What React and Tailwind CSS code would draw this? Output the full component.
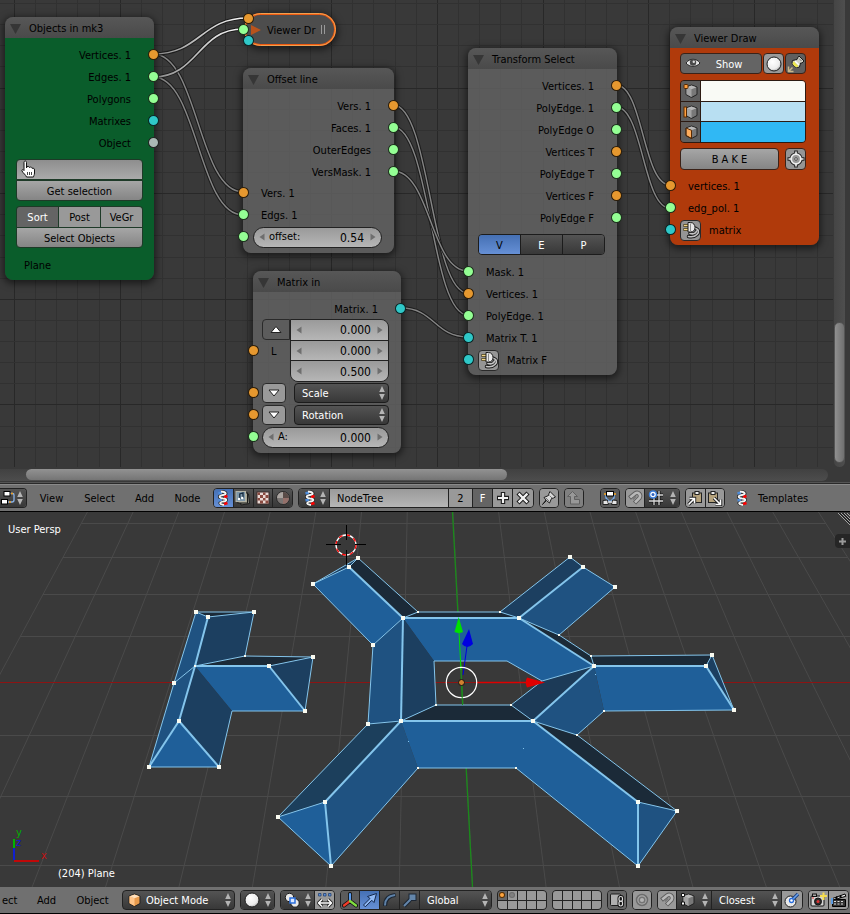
import React from "react";

const ORANGE = "#e6982f";
const GREEN = "#94ff94";
const CYAN = "#2fc8c8";
const GREY = "#a9b8b4";

const NUM = "bg-linear-to-b from-[#9a9a9a] to-[#b6b6b6] text-black";
const BTN = "bg-linear-to-b from-[#a6a6a6] to-[#858585] pt-[2px] text-black";
const DARK = "bg-linear-to-b from-[#545454] to-[#383838] text-white";
const BLUE = "bg-linear-to-b from-[#4570b4] to-[#6690d6]";
const TOGGLE = "bg-[#999999] text-black";
const ON = "bg-[#646464] text-white";

/* ---------- icons ---------- */

function Svg({ children, w = 16, h = 16, className = "" }) {
  return (
    <svg width={w} height={h} viewBox={`0 0 ${w} ${h}`} className={`shrink-0 ${className}`} aria-hidden="true">
      {children}
    </svg>
  );
}

const UpDown = ({ className = "" }) => (
  <Svg w={6} h={14} className={`pointer-events-none ${className}`}>
    <path d="M3 0 L5.8 6 H0.2Z M3 14 L5.8 8 H0.2Z" fill="#b4b4b4" />
  </Svg>
);

const Helix = () => (
  <Svg>
    <path d="M6 1.500 C12 2 12 4.500 8 5 C3 6 4 8 8 8.500 C13 9 12 11 8 11.500 C4 12.500 4 14 9 15" fill="none" stroke="#222" strokeWidth="3.400" />
    <path d="M3.500 3.500 L7 2.500 M3.500 10.500 L7 9.500" stroke="#4d8ddd" strokeWidth="2.400" />
    <path d="M9 7 L12.500 6 M9 14 L12.500 13" stroke="#ff0000" strokeWidth="2.800" />
    <path d="M6 1.500 C12 2 12 4.500 8 5 C3 6 4 8 8 8.500 C13 9 12 11 8 11.500 C4 12.500 4 14 9 15" fill="none" stroke="#f4f4f4" strokeWidth="1.800" />
  </Svg>
);

const NodesIcon = () => (
  <Svg>
    <path d="M7 3.500 H12.500 Q14 3.500 14 5 V10 Q14 12 12 12 H7" fill="none" stroke="#8ab4e8" strokeWidth="1.300" />
    <rect x="4" y="1.500" width="6" height="4.500" fill="#fff" stroke="#000" />
    <rect x="1.500" y="9.500" width="6" height="4.500" fill="#fff" stroke="#000" />
    <path d="M11 3.500 h2 M9 12 h2" stroke="#f0a020" strokeWidth="1.500" />
  </Svg>
);

const CompositeIcon = () => (
  <Svg>
    <path d="M5 4 H13.500 L14.500 13.500 L6 15Z" fill="#8c8c80" stroke="#1c1c1c" />
    <rect x="3" y="3" width="9.500" height="10" fill="#aaa998" stroke="#1c1c1c" />
    <rect x="1" y="1.500" width="9.500" height="10" fill="#7d96a8" stroke="#b4b4a8" />
    <path d="M4.800 9 V4 L8 3 V8" fill="none" stroke="#152a40" strokeWidth="1.300" />
    <circle cx="4" cy="9" r="1.200" fill="#fff" /><circle cx="7.200" cy="8" r="1.200" fill="#fff" />
  </Svg>
);

const TextureIcon = () => (
  <Svg>
    <rect x="2" y="2" width="12" height="12" fill="#ead9d4" stroke="#3a2a28" />
    <path d="M2.500 2.500h2.500v2.500h-2.500z M8 2.500h2.500v2.500h-2.500z M5 5h3v3h-3z M10.500 5h3v3h-3z M2.500 8h2.500v2.500h-2.500z M8 8h2.500v2.500h-2.500z M5 10.500h3v3h-3z M10.500 10.500h3v3h-3z" fill="#8a4a40" />
  </Svg>
);

const MaterialIcon = () => (
  <Svg>
    <circle cx="8" cy="8" r="6.500" fill="#7a7573" stroke="#2a2a2a" />
    <path d="M8 8 V2 A6 6 0 0 1 14 8Z" fill="#5a4c48" />
    <path d="M8 8 H2 A6 6 0 0 1 8 2Z" fill="#aaa4a0" />
    <path d="M8 8 H14 A6 6 0 0 1 8 14Z" fill="#94706a" />
  </Svg>
);

const PlusIcon = () => (
  <Svg>
    <path d="M8 2 V14 M2 8 H14" stroke="#1c1c1c" strokeWidth="4.400" />
    <path d="M8 3 V13 M3 8 H13" stroke="#f2f2f2" strokeWidth="2.200" />
  </Svg>
);

const CrossIcon = () => (
  <Svg>
    <path d="M3 3 L13 13 M13 3 L3 13" stroke="#1c1c1c" strokeWidth="4.400" />
    <path d="M3.600 3.600 L12.400 12.400 M12.400 3.600 L3.600 12.400" stroke="#f2f2f2" strokeWidth="2.200" />
  </Svg>
);

const PinIcon = () => (
  <Svg>
    <path d="M9 1.500 L14.500 7 L12.500 8 L10.500 8.500 L8.500 13 L5.500 10.500 L1.500 14.500 L5 10 L3 7.500 L7.500 5.500 L8 3.500Z" fill="#d8d8d8" stroke="#1c1c1c" strokeLinejoin="round" />
    <path d="M8.500 5.500 L11 8 M5 8 L8 11" stroke="#777" />
  </Svg>
);

const ParentIcon = () => (
  <Svg className="opacity-60">
    <path d="M6.500 1.500 L11.500 6.500 H8.500 V9.500 H13.500 V14 H4.500 V6.500 H1.500Z" fill="#a8a8a8" stroke="#4c4c4c" strokeLinejoin="round" />
  </Svg>
);

const AutoIcon = () => (
  <Svg>
    <path d="M4 4 V8 L8 12 L12 8 V4" fill="none" stroke="#7ab0f0" strokeWidth="1.400" />
    <rect x="4.500" y="1.500" width="7" height="4.500" fill="#fff" stroke="#000" />
    <circle cx="3" cy="4" r="1.100" fill="#f0a020" /><circle cx="13" cy="4" r="1.100" fill="#f0a020" />
    <path d="M1 10.500 L5.500 10 L6.500 14.500 H1Z M15 10.500 L10.500 10 L9.500 14.500 H15Z" fill="#e4e4e4" stroke="#222" />
    <path d="M6 12 H10" stroke="#ddd" strokeWidth="1.500" />
  </Svg>
);

const MagnetIcon = () => (
  <Svg>
    <path d="M2.500 8 L8 3.500 C11 1.500 14.500 4.500 12.500 8 L7.500 13" fill="none" stroke="#5c5c5c" strokeWidth="4.400" />
    <path d="M3.200 7.500 L8 3.500 C11 1.500 14.500 4.500 12.500 8 L8 12.500" fill="none" stroke="#b8b8b8" strokeWidth="2.600" />
    <path d="M6 9.500 L9 6.500" stroke="#777" strokeWidth="1.200" />
  </Svg>
);

const GridSnapIcon = () => (
  <Svg>
    <path d="M6 5 V15 M11 1 V15 M1 11 H15 M8 5 H15" stroke="#111" strokeWidth="3" />
    <path d="M6 5 V15 M11 1 V15 M1 11 H15 M8 5 H15" stroke="#d8d8d8" strokeWidth="1.300" />
    <circle cx="5" cy="4.500" r="3.500" fill="#fff" stroke="#3b7edb" strokeWidth="1.500" />
    <circle cx="5" cy="4.500" r="1.500" fill="#2d62c0" />
  </Svg>
);

const Clipboard = ({ out }) => (
  <Svg>
    <rect x={out ? 1.500 : 5.500} y="3" width="9" height="9.500" fill="#b5a27c" stroke="#222" />
    <rect x={out ? 4 : 8} y="1.500" width="4" height="3" fill="#eee" stroke="#222" />
    <path d={out ? "M7 8 L13 14 M13.500 9.500 V14.500 H8.500" : "M1.500 14.500 L7 9 M2.500 8.500 H7.500 V13.500"} fill="none" stroke="#222" strokeWidth="3.400" />
    <path d={out ? "M7 8 L13 14 M13.500 9.500 V14.500 H8.500" : "M1.500 14.500 L7 9 M2.500 8.500 H7.500 V13.500"} fill="none" stroke="#fff" strokeWidth="1.600" />
  </Svg>
);

const PlugIcon = () => (
  <Svg w={18} h={18}>
    <path d="M12 7 C17 8 17.500 11 15 13.500 C12.500 16 9 16 6.500 15.500 M8 12.500 C11 13.500 14 12.500 14.500 10" fill="none" stroke="#1d1d1d" strokeWidth="3.400" strokeLinecap="round" />
    <path d="M12 7 C17 8 17.500 11 15 13.500 C12.500 16 9 16 6.500 15.500 M8 12.500 C11 13.500 14 12.500 14.500 10" fill="none" stroke="#c4c4c4" strokeWidth="1.600" strokeLinecap="round" />
    <path d="M1.500 4.500 H7 M1.500 8.500 H7" stroke="#3a3010" strokeWidth="3" />
    <path d="M2 4.500 H7 M2 8.500 H7" stroke="#f3d88a" strokeWidth="1.500" />
    <path d="M6 1.500 H8.500 C11.500 1.500 13 4 13 6.500 C13 9 11.500 11 8.500 11 H6Z" fill="#e8e8e8" stroke="#1d1d1d" />
    <path d="M8.500 2.500 V10" stroke="#8a8a8a" />
  </Svg>
);

const EyeIcon = () => (
  <Svg>
    <path d="M1 8 C4.500 3 11.500 3 15 8 C11.500 12.500 4.500 12.500 1 8Z" fill="#e6e6e6" stroke="#262626" />
    <circle cx="8" cy="7.500" r="3.200" fill="#4a4a4a" />
    <circle cx="8.800" cy="6.800" r="1.200" fill="#ddd" />
  </Svg>
);

const Sphere = () => (
  <Svg>
    <defs>
      <radialGradient id="ball" cx="0.400" cy="0.350" r="0.700">
        <stop offset="0" stopColor="#ffffff" />
        <stop offset="0.700" stopColor="#ececec" />
        <stop offset="1" stopColor="#a8a8a8" />
      </radialGradient>
    </defs>
    <circle cx="8" cy="8" r="7" fill="url(#ball)" stroke="#1c1c1c" />
  </Svg>
);

const LampPin = () => (
  <Svg w={18} h={18}>
    <path d="M12 1 L17 6 L15 8 L13.500 8 L12.500 12 C9 14 3.500 9.500 5.500 5.500 L10 4.500 L10.500 3Z" fill="#cfcfc4" stroke="#1c1c1c" strokeLinejoin="round" />
    <path d="M5.500 8.500 Q6.500 11.500 10 12.500 L11.500 10.500 Q8.500 9 7 6Z" fill="#ece850" />
    <path d="M8 6 L12 10" stroke="#fff" strokeWidth="1.500" />
    <path d="M12 3.500 L14.500 6" stroke="#777" />
    <path d="M2 16 L5.500 12.500 M1.500 11.500 V16.500 H6.500" fill="none" stroke="#c9b78a" strokeWidth="1.500" />
  </Svg>
);

const TargetIcon = () => (
  <Svg w={18} h={18}>
    <path d="M9 0.500 V5 M9 13 V17.500 M0.500 9 H5 M13 9 H17.500" stroke="#222" strokeWidth="3.600" />
    <circle cx="9" cy="9" r="4.800" fill="#999" stroke="#222" strokeWidth="3.600" />
    <path d="M9 1.500 V6 M9 12 V16.500 M1.500 9 H6 M12 9 H16.500" stroke="#eee" strokeWidth="1.600" />
    <circle cx="9" cy="9" r="4.800" fill="#999" stroke="#eee" strokeWidth="1.800" />
    <circle cx="9" cy="9" r="1.300" fill="#eee" stroke="#222" strokeWidth="0.700" />
  </Svg>
);

const Cube = ({ mode }) => (
  <Svg>
    <path d="M8.500 2 L14 4 V11.500 L8.500 14.500 L3 11.500 V4Z" fill={mode === "object" ? "#e89a4c" : "#787878"} stroke="#222" strokeLinejoin="round" />
    <path d="M3.500 4.300 L8.500 6.300 V13.900 L3.500 11.200Z" fill={mode === "face" ? "#ffad5c" : mode === "object" ? "#ffc488" : "#a4a4a4"} />
    <path d="M3.500 4.200 L8.500 2.500 L13.500 4.200 L8.500 6.200Z" fill={mode === "object" ? "#ffe0bc" : "#b8b8b8"} />
    {mode === "face" && <path d="M3 4 L8.500 6.300 V14.500 L3 11.500Z" fill="none" stroke="#5a2a00" />}
    {mode === "vertex" && <rect x="1" y="1.500" width="4" height="4" rx="1" fill="#ffa040" stroke="#5a2a00" />}
    {mode === "edge" && <rect x="1" y="3" width="2.500" height="10" fill="#ffa040" stroke="#5a2a00" />}
    {mode === "snap" && <path d="M1.500 1.500h3v3h-3z M1.500 10h3v3h-3z" fill="#fff" stroke="#111" />}
  </Svg>
);

const PivotIcon = () => (
  <Svg>
    <circle cx="5.500" cy="5.500" r="4.200" fill="#e8e8e8" stroke="#1c1c1c" />
    <circle cx="11" cy="11" r="4.200" fill="#e8e8e8" stroke="#1c1c1c" />
    <rect x="6" y="6" width="5" height="5" fill="#dce9ff" stroke="#2a6edc" strokeWidth="1.500" />
  </Svg>
);

const CentersIcon = () => (
  <Svg>
    <path d="M1.500 1.500h2.500v2.500h-2.500z M6.500 1.500h2.500v2.500h-2.500z M11.500 1.500h2.500v2.500h-2.500z" fill="#5b8fdc" stroke="#24416e" strokeWidth="0.800" />
    <path d="M2 11 H14 M5 7.500 L1.500 11 L5 14.500 M11 7.500 L14.500 11 L11 14.500" fill="none" stroke="#222" strokeWidth="3.200" />
    <path d="M2 11 H14 M5 7.500 L1.500 11 L5 14.500 M11 7.500 L14.500 11 L11 14.500" fill="none" stroke="#fff" strokeWidth="1.500" />
  </Svg>
);

const AxesIcon = () => (
  <Svg>
    <path d="M8 9 V2 M8 9 L2 13.500 M8 9 L14 13.500" stroke="#111" strokeWidth="4" strokeLinecap="round" />
    <path d="M8 9 V2" stroke="#5a9cf0" strokeWidth="2.200" strokeLinecap="round" />
    <path d="M8 9 L2 13.500" stroke="#f03c28" strokeWidth="2.200" strokeLinecap="round" />
    <path d="M8 9 L14 13.500" stroke="#80e040" strokeWidth="2.200" strokeLinecap="round" />
  </Svg>
);

const ArrowIcon = () => (
  <Svg>
    <path d="M1.500 13 L8 6.500 L5.500 4.500 L14.500 1.500 L12 10.500 L9.800 8.300 L3.300 14.800Z" fill="#8fb8f4" stroke="#12274c" strokeLinejoin="round" />
  </Svg>
);

const ArcIcon = () => (
  <Svg>
    <path d="M3 14 Q3 4 13.500 3" fill="none" stroke="#1c2633" strokeWidth="4" />
    <path d="M3 13.500 Q3 4 13 3" fill="none" stroke="#5f82a8" strokeWidth="2" />
  </Svg>
);

const ScaleIcon = () => (
  <Svg>
    <path d="M2 14 L8 8" stroke="#1c2633" strokeWidth="4" />
    <rect x="7" y="2" width="7" height="6.500" fill="#6486aa" stroke="#1c2633" />
    <path d="M2 14 L8.500 7.500" stroke="#6486aa" strokeWidth="2" />
  </Svg>
);

const LockIcon = () => (
  <Svg>
    <rect x="1.500" y="2" width="10" height="11.500" rx="1" fill="#b0b0b0" stroke="#1c1c1c" />
    <rect x="10" y="4.500" width="3.500" height="5" rx="1.700" fill="none" stroke="#111" strokeWidth="3" />
    <rect x="10" y="9" width="3.500" height="5" rx="1.700" fill="none" stroke="#111" strokeWidth="3" />
    <rect x="10" y="4.500" width="3.500" height="5" rx="1.700" fill="none" stroke="#ddd" strokeWidth="1.200" />
    <rect x="10" y="9" width="3.500" height="5" rx="1.700" fill="none" stroke="#ddd" strokeWidth="1.200" />
  </Svg>
);

const RingIcon = () => (
  <Svg>
    <circle cx="8" cy="8" r="5.500" fill="#aaa" stroke="#6c6c6c" strokeWidth="1.500" />
    <circle cx="8" cy="8" r="2.800" fill="#b4b4b4" stroke="#757575" strokeWidth="1.500" />
  </Svg>
);

const SnapBallIcon = () => (
  <Svg>
    <circle cx="6.500" cy="9.500" r="5.500" fill="#e8e8e8" stroke="#1c1c1c" />
    <path d="M7 9 L14 2" stroke="#1b3f80" strokeWidth="3.400" />
    <path d="M7 9 L14 2" stroke="#6aa4f0" strokeWidth="1.600" />
    <circle cx="7.500" cy="8.500" r="2" fill="#fff" stroke="#2a6edc" strokeWidth="1.300" />
  </Svg>
);

const CameraIcon = () => (
  <Svg w={18}>
    <rect x="1" y="4" width="13" height="10" rx="1" fill="#d4d4d4" stroke="#111" />
    <rect x="2.500" y="2" width="4" height="2.500" fill="#aaa" stroke="#111" />
    <circle cx="8" cy="9.500" r="3.500" fill="#2c2c2c" stroke="#111" />
    <circle cx="8" cy="9.500" r="1.500" fill="#d33" />
    <circle cx="3" cy="6" r="0.800" fill="#e22" />
    <path d="M13.500 0.500 V8 M10 4 H17" stroke="#f5dc50" strokeWidth="2" />
  </Svg>
);

const ClapperIcon = () => (
  <Svg>
    <path d="M1.500 7.500 H14.500 V14.500 H1.500Z" fill="#333" stroke="#000" />
    <path d="M3 9.500 H13 M3 12 H13" stroke="#ddd" strokeDasharray="2 1.500" />
    <path d="M1.500 6.500 L14 2 L14.800 4.300 L2 8Z" fill="#eee" stroke="#000" />
    <path d="M5 6.800 L6 4.500 M9 5.600 L10 3.500" stroke="#000" strokeWidth="1.800" />
    <path d="M0 6 h2 v6 h-2z" fill="#5b9be0" />
  </Svg>
);

const HandCursor = () => (
  <Svg w={18} h={20}>
    <path d="M4 2.500 C4 0.500 6.500 0.500 6.500 2.500 V8 L7 6.500 C9 6 9.300 7 9.300 7.500 C11 6.500 12 7.500 12 8.300 C13.500 7.800 14.500 8.500 14.500 10 V13 C14.500 15 13.500 16 13.500 17 H6.500 C6 15 3 13 2 11 C1.500 9.500 3 9 4 10.500Z" fill="#fff" stroke="#111" strokeLinejoin="round" />
    <path d="M7.500 12 V15 M9.500 12 V15 M11.500 12 V15" stroke="#444" />
  </Svg>
);

/* ---------- node building blocks ---------- */

function Socket({ color, side }) {
  return (
    <span
      className={`absolute size-[11px] rounded-full border border-black/80 ${side === "left" ? "-left-[5px] top-[5px]" : "-right-[5px] top-[6px]"}`}
      style={{ backgroundColor: color }}
    />
  );
}

function Out({ label, color }) {
  return (
    <div className="relative flex h-[22px] items-center justify-end pr-[23px] pt-[3px]">
      {label}
      <Socket color={color} side="right" />
    </div>
  );
}

function In({ label, color, plug }) {
  return (
    <div className={`relative flex h-[22px] items-center ${plug ? "gap-[8px] pl-[10px]" : "pl-[18px]"}`}>
      <Socket color={color} side="left" />
      {plug && (
        <button aria-label={`${label} link`} className="flex size-[21px] items-center justify-center rounded-[4px] border border-[#2a2a2a] bg-[#959595]">
          <PlugIcon />
        </button>
      )}
      <span className="pt-[2px]">{label}</span>
    </div>
  );
}

function Node({ title, className, body, children }) {
  return (
    <section className={`absolute rounded-[8px] shadow-[0_2px_7px_2px_rgba(0,0,0,0.5)] ${className}`}>
      <header className="flex h-[21px] items-center gap-[13px] rounded-t-[8px] bg-linear-to-b from-[#575757] to-[#4a4a4a] pl-[5px]">
        <button aria-label={`Collapse ${title}`} className="flex h-4 w-[11px] items-center pt-[2px]">
          <Svg w={11} h={11}><path d="M0 1 H11 L5.500 11Z" fill="#363636" /></Svg>
        </button>
        <h2 className="-ml-[5px] pl-[0px] pt-[2px]">{title}</h2>
      </header>
      <div className={`rounded-b-[8px] pt-[5px] ${body}`}>{children}</div>
    </section>
  );
}

const Tri = ({ dir }) => (
  <Svg w={6} h={8}>
    <path d={dir === "left" ? "M5.500 0.500 V7.500 L0.500 4Z" : "M0.500 0.500 V7.500 L5.500 4Z"} fill="#6e6e6e" />
  </Svg>
);

function NumberField({ label, name, value, className }) {
  return (
    <label className={`flex items-center px-[5px] text-xs ${NUM} ${className}`}>
      <Tri dir="left" />
      {label && <span className="ml-[4px] pt-px text-[11px]">{label}</span>}
      <input aria-label={name} defaultValue={value} className="mr-[6px] w-0 min-w-0 flex-1 bg-transparent pt-px text-right outline-none" />
      <Tri dir="right" />
    </label>
  );
}

function Dropdown({ name, value, options, className = "", pad = "pl-[7px]", icon }) {
  return (
    <div className={`relative flex items-center ${DARK} ${className}`}>
      {icon && <span className="pointer-events-none absolute left-[3px]">{icon}</span>}
      <select aria-label={name} defaultValue={value} className={`h-full w-full appearance-none bg-transparent pt-[2px] outline-none ${pad}`}>
        {options.map((o) => <option key={o} className="bg-[#383838]">{o}</option>)}
      </select>
      <UpDown className="absolute right-[3px]" />
    </div>
  );
}

/* ---------- node editor ---------- */

const LINKS = [
  [393, 105, 468, 293], [393, 127, 468, 315], [393, 171, 468, 271],
  [401, 308, 468, 337], [616, 85, 670, 185], [616, 107, 670, 208],
  [153, 54, 243, 192], [153, 77, 243, 215],
];
const ACTIVE_LINKS = [[153, 54, 248, 18], [153, 77, 243, 29]];

function curve([x1, y1, x2, y2]) {
  const h = (x2 - x1) * 0.5;
  return `M${x1} ${y1} C${x1 + h} ${y1} ${x2 - h} ${y2} ${x2} ${y2}`;
}

function CanvasBackdrop() {
  const cells = Array.from({ length: 100 }, (_, i) => i);
  return (
    <svg className="absolute inset-0 h-full w-full" aria-hidden="true">
      <defs>
        <linearGradient id="active" x1="0" x2="1" y1="0" y2="0">
          <stop offset="0" stopColor="#888" /><stop offset="1" stopColor="#fff" />
        </linearGradient>
      </defs>
      {cells.map((i) => (
        <rect key={i} shapeRendering="crispEdges" x={Math.round(14 + 21.140 * i)} y="0" width="1" height="100%" fill={i % 5 === 0 ? "#282828" : "#313131"} />
      ))}
      {cells.map((i) => (
        <rect key={i} shapeRendering="crispEdges" x="0" y={Math.round(3 + 21.130 * i)} width="100%" height="1" fill={i % 5 === 4 ? "#282828" : "#313131"} />
      ))}
      {LINKS.map((l) => (
        <g key={l.join()} fill="none">
          <path d={curve(l)} stroke="#1c1c1c" strokeWidth="3.500" />
          <path d={curve(l)} stroke="#858585" strokeWidth="1.400" />
        </g>
      ))}
      {ACTIVE_LINKS.map((l) => (
        <g key={l.join()} fill="none">
          <path d={curve(l)} stroke="#1c1c1c" strokeWidth="3.500" />
          <path d={curve(l)} stroke="url(#active)" strokeWidth="1.600" />
        </g>
      ))}
    </svg>
  );
}

const GREY_BODY = "bg-[#646464]/80";

function ObjectsNode() {
  return (
    <Node title="Objects in mk3" className="left-[5px] top-[17px] w-[149px]" body="bg-[#0a5d2b] pb-[4px]">
      <Out label="Vertices. 1" color={ORANGE} />
      <Out label="Edges. 1" color={GREEN} />
      <Out label="Polygons" color={GREEN} />
      <Out label="Matrixes" color={CYAN} />
      <Out label="Object" color={GREY} />
      <div className="mx-[11px] mt-[6px] flex flex-col">
        <div className="relative h-[21px]">
          <input aria-label="Group name" className="h-full w-full rounded-t-[4px] border border-[#1e3a28] bg-linear-to-b from-[#8e8e8e] to-[#aaaaaa] px-2 outline-none" />
          <span className="pointer-events-none absolute left-1 top-px"><HandCursor /></span>
        </div>
        <button className={`h-[21px] rounded-b-[4px] border border-[#1e3a28] ${BTN}`}>Get selection</button>
        <div className="mt-[5px] flex h-[21px] divide-x divide-[#1e3a28] overflow-hidden rounded-t-[4px] border border-b-0 border-[#1e3a28]">
          <button aria-pressed="true" className={`flex-1 pt-[2px] ${ON}`}>Sort</button>
          <button className={`flex-1 pt-[2px] ${TOGGLE}`}>Post</button>
          <button className={`flex-1 pt-[2px] ${TOGGLE}`}>VeGr</button>
        </div>
        <button className={`h-[21px] rounded-b-[4px] border border-[#1e3a28] ${BTN}`}>Select Objects</button>
      </div>
      <p className="mt-[6px] flex h-[22px] items-center pl-[19px] pt-px">Plane</p>
    </Node>
  );
}

function OffsetNode() {
  return (
    <Node title="Offset line" className="left-[243px] top-[68px] w-[151px]" body={`${GREY_BODY} pb-[5px]`}>
      <Out label="Vers. 1" color={ORANGE} />
      <Out label="Faces. 1" color={GREEN} />
      <Out label="OuterEdges" color={GREEN} />
      <Out label="VersMask. 1" color={GREEN} />
      <In label="Vers. 1" color={ORANGE} />
      <In label="Edgs. 1" color={GREEN} />
      <div className="relative flex h-[22px] items-center pl-[10px] pr-[12px]">
        <Socket color={GREEN} side="left" />
        <NumberField label="offset:" name="offset" value="0.54" className="h-[21px] flex-1 rounded-full border border-[#222]" />
      </div>
    </Node>
  );
}

function MatrixNode() {
  return (
    <Node title="Matrix in" className="left-[253px] top-[271px] w-[148px]" body={`${GREY_BODY} pb-[5px]`}>
      <Out label="Matrix. 1" color={CYAN} />
      <div className="flex pl-[9px] pr-[12px]">
        <div className="flex w-[28px] flex-col">
          <button aria-label="Collapse location" className="flex h-[21px] items-center justify-center rounded-l-[4px] border border-[#2a2a2a] bg-[#5c5c5c]">
            <Svg w={12} h={8}><path d="M6 0.500 L11 6.500 H1Z" fill="#fff" stroke="#222" /></Svg>
          </button>
          <div className="relative -ml-[9px] flex h-[22px] items-center pl-[18px] pt-px">
            <Socket color={ORANGE} side="left" />L
          </div>
        </div>
        <div className="flex h-[63px] flex-1 flex-col divide-y divide-[#222] overflow-hidden rounded-r-[8px] rounded-bl-[8px] border border-[#222]">
          <NumberField name="X" value="0.000" className="flex-1" />
          <NumberField name="Y" value="0.000" className="flex-1" />
          <NumberField name="Z" value="0.500" className="flex-1" />
        </div>
      </div>
      {["Scale", "Rotation"].map((n) => (
        <div key={n} className="relative flex h-[22px] items-center gap-[8px] pl-[9px] pr-[12px]">
          <Socket color={ORANGE} side="left" />
          <button aria-label={`Expand ${n}`} className="flex h-[20px] w-[24px] items-center justify-center rounded-[4px] border border-[#2a2a2a] bg-[#999]">
            <Svg w={12} h={8}><path d="M1 1 H11 L6 7Z" fill="#fff" stroke="#222" /></Svg>
          </button>
          <Dropdown name={n} value={n} options={[n]} className="h-[20px] flex-1 rounded-[4px] border border-[#1c1c1c]" />
        </div>
      ))}
      <div className="relative flex h-[22px] items-center pl-[9px] pr-[12px]">
        <Socket color={GREEN} side="left" />
        <NumberField label="A:" name="Angle" value="0.000" className="h-[21px] flex-1 rounded-full border border-[#222]" />
      </div>
    </Node>
  );
}

function TransformNode() {
  return (
    <Node title="Transform Select" className="left-[468px] top-[48px] w-[149px]" body={`${GREY_BODY} pb-[4px]`}>
      <Out label="Vertices. 1" color={ORANGE} />
      <Out label="PolyEdge. 1" color={GREEN} />
      <Out label="PolyEdge O" color={GREEN} />
      <Out label="Vertices T" color={ORANGE} />
      <Out label="PolyEdge T" color={GREEN} />
      <Out label="Vertices F" color={ORANGE} />
      <Out label="PolyEdge F" color={GREEN} />
      <div className="mb-[6px] ml-[10px] mr-[12px] mt-[6px] flex h-[21px] divide-x divide-[#1c1c1c] overflow-hidden rounded-[4px] border border-[#1c1c1c]">
        <button aria-pressed="true" className={`flex-1 pt-[2px] text-black ${BLUE}`}>V</button>
        <button className={`flex-1 pt-[2px] ${DARK}`}>E</button>
        <button className={`flex-1 pt-[2px] ${DARK}`}>P</button>
      </div>
      <In label="Mask. 1" color={GREEN} />
      <In label="Vertices. 1" color={ORANGE} />
      <In label="PolyEdge. 1" color={GREEN} />
      <In label="Matrix T. 1" color={CYAN} />
      <In label="Matrix F" color={CYAN} plug />
    </Node>
  );
}

function ViewerNode() {
  const cell = "flex h-[21px] w-[21px] items-center justify-center rounded-[4px] border border-[#3a2218]";
  return (
    <Node title="Viewer Draw" className="left-[670px] top-[27px] w-[149px]" body="bg-[#b03a0b] pb-[4px]">
      <div className="flex gap-px pl-[10px] pr-[13px]">
        <button aria-pressed="true" className={`relative flex h-[21px] flex-1 items-center justify-center rounded-[4px] border border-[#3a2218] pl-[16px] pt-[2px] ${ON}`}>
          <span className="absolute left-[4px] top-px"><EyeIcon /></span>
          Show
        </button>
        <button aria-label="Shading" className={`${cell} bg-[#999]`}><Sphere /></button>
        <button aria-label="Light" className={`${cell} bg-[#5f5f5f]`}><LampPin /></button>
      </div>
      <div className="ml-[10px] mr-[13px] mt-[6px] flex h-[63px] flex-col divide-y divide-[#2c1a12] overflow-hidden rounded-[4px] border border-[#2c1a12]">
        {[["vertex", "bg-[#f9faf5]"], ["edge", "bg-[#b8dff2]"], ["face", "bg-[#30b8f4]"]].map(([m, bg]) => (
          <div key={m} className="flex flex-1 divide-x divide-[#2c1a12]">
            <button aria-label={`Show ${m}`} className="flex w-[20px] items-center justify-center bg-[#5f5f5f]"><Cube mode={m} /></button>
            <button aria-label={`${m} colour`} className={`flex-1 ${bg}`} />
          </div>
        ))}
      </div>
      <div className="mb-[5px] mt-[5px] flex justify-between gap-[6px] pl-[10px] pr-[13px]">
        <button className={`h-[22px] flex-1 rounded-[4px] border border-[#3a2218] ${BTN}`}>B A K E</button>
        <button aria-label="Origin" className="flex h-[22px] w-[21px] items-center justify-center rounded-[4px] border border-[#3a2218] bg-[#959595]"><TargetIcon /></button>
      </div>
      <In label="vertices. 1" color={ORANGE} />
      <In label="edg_pol. 1" color={GREEN} />
      <In label="matrix" color={CYAN} plug />
    </Node>
  );
}

function CollapsedViewer() {
  const dot = "absolute size-[11px] rounded-full border border-black/80";
  return (
    <section className="absolute left-[244px] top-[13px] flex h-[33px] w-[92px] items-center rounded-full border-2 border-[#ee5a12] bg-[#4d4d4d] pl-[5px] shadow-[0_2px_7px_2px_rgba(0,0,0,0.5)] outline-1 -outline-offset-1 outline-[#f0a050]">
      <button aria-label="Expand Viewer Draw" className="mr-[6px]">
        <Svg w={10} h={10}><path d="M0 0 L10 5 L0 10Z" fill="#b8531c" /></Svg>
      </button>
      <h2 className="whitespace-nowrap pt-[2px]">Viewer Dr</h2>
      <span className="ml-[6px] h-[9px] w-[4px] border-x border-[#9a9a9a]" />
      <span className={`${dot} -left-[3px] -top-[2px] bg-[#e6982f]`} />
      <span className={`${dot} -left-[8px] top-[9px] bg-[#94ff94]`} />
      <span className={`${dot} -left-[3px] top-[20px] bg-[#2fc8c8]`} />
    </section>
  );
}

function NodeEditor() {
  return (
    <section className="flex h-[485px] flex-none flex-col border-b border-[#8a8a8a] bg-[#393939]">
      <div className="flex min-h-0 flex-1">
        <div className="relative flex-1">
          <CanvasBackdrop />
          <ObjectsNode />
          <CollapsedViewer />
          <OffsetNode />
          <MatrixNode />
          <TransformNode />
          <ViewerNode />
        </div>
        <div className="flex w-[17px] pl-px">
          <div className="flex w-[11px] flex-col justify-end rounded-b-full bg-linear-to-r from-[#454545] to-[#4e4e4e] pb-[4px]">
            <div className="h-[141px] rounded-full border border-[#555] bg-linear-to-r from-[#909090] to-[#707070]" />
          </div>
        </div>
      </div>
      <div className="flex h-[17px] flex-none flex-col justify-between pt-[2px]">
        <div className="mr-[22px] h-[12px] rounded-r-full bg-linear-to-b from-[#414141] to-[#4d4d4d] pl-[26px]">
          <div className="h-[11px] w-[60%] rounded-full bg-linear-to-b from-[#929292] to-[#757575]" />
        </div>
        <div className="h-[2px] border-t border-[#555] bg-[#2a2a2a]" />
      </div>
    </section>
  );
}

/* ---------- header bars ---------- */

const BAR = "flex h-[27px] flex-none items-start overflow-hidden border-b border-black bg-[#707070] pt-[3px] whitespace-nowrap";
const GROUP = "flex h-5 flex-none divide-x divide-[#222] overflow-hidden rounded-[4px] border border-[#222]";
const MENU = "h-5 flex-none pt-[2px] text-black";

const IconCell = ({ label, className = "flex-1", tone = DARK, children }) => (
  <button aria-label={label} className={`flex h-full items-center justify-center ${className} ${tone}`}>{children}</button>
);

const IconDropdown = ({ label, className, children }) => (
  <button aria-label={label} aria-haspopup="listbox" className={`flex h-full items-center justify-between pl-[3px] pr-[3px] ${className} ${DARK}`}>
    {children}
    <UpDown />
  </button>
);

function NodeHeader() {
  return (
    <nav className={BAR}>
      <div className={`${GROUP} w-[27px] rounded-l-none border-l-0`}>
        <button aria-label="Editor type" className={`flex h-full w-full items-center gap-[1px] ${DARK}`}><NodesIcon /><UpDown /></button>
      </div>
      <div className="ml-[2px] flex">
        <button className={`w-[45px] ${MENU}`}>View</button>
        <button className={`w-[51px] ${MENU}`}>Select</button>
        <button className={`w-[39px] ${MENU}`}>Add</button>
        <button className={`w-[47px] ${MENU}`}>Node</button>
      </div>
      <div className={`${GROUP} ml-[2px] w-[80px]`}>
        <IconCell label="Sverchok" tone={BLUE}><Helix /></IconCell>
        <IconCell label="Compositing"><CompositeIcon /></IconCell>
        <IconCell label="Texture"><TextureIcon /></IconCell>
        <IconCell label="Material"><MaterialIcon /></IconCell>
      </div>
      <div className={`${GROUP} ml-[5px] w-[236px]`}>
        <IconDropdown label="Browse node tree" className="w-[31px]"><Helix /></IconDropdown>
        <input aria-label="Node tree name" defaultValue="NodeTree" className={`w-0 min-w-0 flex-1 px-[7px] pt-[2px] outline-none ${NUM}`} />
        <button aria-label="Users" className={`w-[24px] pt-[2px] ${TOGGLE}`}>2</button>
        <button aria-label="Fake user" className={`w-[20px] pt-[2px] ${ON}`}>F</button>
        <IconCell label="New" className="w-[20px]" tone={TOGGLE}><PlusIcon /></IconCell>
        <IconCell label="Unlink" className="w-[20px]" tone={TOGGLE}><CrossIcon /></IconCell>
      </div>
      <div className={`${GROUP} ml-[5px] w-[20px]`}><IconCell label="Pin" tone={TOGGLE}><PinIcon /></IconCell></div>
      <div className={`${GROUP} ml-[5px] w-[20px] border-[#5a5a5a]`}><IconCell label="Parent tree" tone="bg-[#808080]"><ParentIcon /></IconCell></div>
      <div className={`${GROUP} ml-[16px] w-[20px]`}><IconCell label="Auto offset" tone="bg-[#5c5c5c]"><AutoIcon /></IconCell></div>
      <div className={`${GROUP} ml-[5px] w-[55px]`}>
        <IconCell label="Snap" className="w-[19px]" tone={TOGGLE}><MagnetIcon /></IconCell>
        <IconDropdown label="Snap element" className="flex-1"><GridSnapIcon /></IconDropdown>
      </div>
      <div className={`${GROUP} ml-[5px] w-[40px]`}>
        <IconCell label="Copy" tone={TOGGLE}><Clipboard /></IconCell>
        <IconCell label="Paste" tone={TOGGLE}><Clipboard out /></IconCell>
      </div>
      <span className="ml-[9px] mt-[2px]"><Helix /></span>
      <button className={`ml-[8px] ${MENU}`}>Templates</button>
    </nav>
  );
}

function Layers({ label, used }) {
  return (
    <div className="ml-[5px] grid h-5 w-[50px] flex-none grid-cols-5 grid-rows-2 gap-px overflow-hidden rounded-[4px] border border-[#222] bg-[#222]">
      {Array.from({ length: 10 }, (_, i) => (
        <button key={i} aria-label={`${label} ${i + 1}`} className={`flex items-center justify-center ${used && i === 0 ? "bg-[#666]" : "bg-[#999]"}`}>
          {used && i === 0 && <span className="size-[4px] rounded-full bg-[#ffa640] ring-1 ring-[#5a3000]" />}
          {used && i === 1 && <span className="size-[4px] rounded-full bg-[#808080] ring-1 ring-[#6c6c6c]" />}
        </button>
      ))}
    </div>
  );
}

function ViewHeader() {
  return (
    <nav className={BAR}>
      <div className="flex">
        <button className={`w-[27px] pl-[2px] text-left ${MENU}`}>ect</button>
        <button className={`w-[39px] ${MENU}`}>Add</button>
        <button className={`w-[53px] ${MENU}`}>Object</button>
      </div>
      <Dropdown name="Mode" value="Object Mode" options={["Object Mode"]} pad="pl-[23px]" icon={<Cube mode="object" />} className="ml-[3px] h-5 w-[113px] flex-none rounded-[4px] border border-[#222]" />
      <div className={`${GROUP} ml-[5px] w-[35px]`}><IconDropdown label="Viewport shading" className="flex-1"><Sphere /></IconDropdown></div>
      <div className={`${GROUP} ml-[5px] w-[55px]`}>
        <IconDropdown label="Pivot" className="w-[34px]"><PivotIcon /></IconDropdown>
        <IconCell label="Object centers" tone={TOGGLE}><CentersIcon /></IconCell>
      </div>
      <div className={`${GROUP} ml-[5px] w-[152px]`}>
        <IconCell label="Manipulator" className="w-[19px]" tone="bg-[#5c5c5c]"><AxesIcon /></IconCell>
        <IconCell label="Translate" className="w-[20px]" tone={BLUE}><ArrowIcon /></IconCell>
        <IconCell label="Rotate" className="w-[20px]"><ArcIcon /></IconCell>
        <IconCell label="Scale" className="w-[20px]"><ScaleIcon /></IconCell>
        <Dropdown name="Orientation" value="Global" options={["Global"]} className="h-full flex-1" />
      </div>
      <Layers label="Layer" used />
      <Layers label="Upper layer" />
      <div className={`${GROUP} ml-[5px] w-[20px]`}><IconCell label="Lock to scene" tone="bg-[#666]"><LockIcon /></IconCell></div>
      <div className={`${GROUP} ml-[5px] w-[20px]`}><IconCell label="Proportional editing" tone={TOGGLE}><RingIcon /></IconCell></div>
      <div className={`${GROUP} ml-[5px] w-[146px]`}>
        <IconCell label="Snap" className="w-[19px]" tone={TOGGLE}><MagnetIcon /></IconCell>
        <IconDropdown label="Snap element" className="w-[35px]"><Cube mode="snap" /></IconDropdown>
        <Dropdown name="Snap target" value="Closest" options={["Closest"]} className="h-full flex-1" />
        <IconCell label="Snap peel" className="w-[20px]" tone={TOGGLE}><SnapBallIcon /></IconCell>
      </div>
      <div className={`${GROUP} ml-[5px] w-[41px]`}>
        <IconCell label="Render" tone={TOGGLE}><CameraIcon /></IconCell>
        <IconCell label="Render animation" tone={TOGGLE}><ClapperIcon /></IconCell>
      </div>
    </nav>
  );
}

/* ---------- 3D viewport ---------- */

const P = {
  A: [196, 612], B: [254, 612], C: [208, 617], D: [195, 666], E: [245, 656], F: [313, 657], G: [269, 666],
  H: [305, 711], I: [232, 711], J: [179, 721], K: [149, 767], L: [219, 767], M: [174, 683],
  a: [313, 584], b: [349, 567], c: [358, 558], d: [418, 612], e: [403, 618], f: [373, 645], g: [368, 724],
  h: [401, 721], i: [278, 817], j: [325, 802], k: [331, 866], l: [418, 768], m: [500, 612], n: [519, 618],
  o: [570, 557], p: [583, 567], q: [615, 587], r: [559, 635], s: [591, 656], t: [594, 666], u: [712, 655],
  v: [706, 666], w: [734, 710], x: [604, 711], y: [577, 735], z: [533, 721], 1: [638, 802], 2: [677, 811],
  3: [638, 866], 4: [516, 768], 5: [434, 661], 6: [507, 661], 7: [542, 681], 8: [511, 705], 9: [436, 705],
};
const BRIGHT = "#1f5f99", MID = "#1f5281", DIM = "#1c3f60", DEEP = "#1b2a38";
const FACES = [
  ["ACDM", MID], ["MDJK", MID], ["CBED", DIM], ["ABC", DEEP], ["DEFG", DEEP], ["DGHI", BRIGHT], ["GFH", DIM],
  ["DILJ", DIM], ["JLK", BRIGHT],
  ["abef", BRIGHT], ["acb", DIM], ["cdeb", DEEP], ["dmne", DEEP], ["mopn", DIM], ["pqrn", MID], ["ent765", BRIGHT],
  ["nrst", DEEP], ["suvt", DEEP], ["uwv", DIM], ["tvwx", BRIGHT], ["txyz", MID], ["t78z", "#1c3a57"],
  ["98zh", DEEP], ["e59h", DIM], ["fehg", MID], ["ghji", "#1c3f5c"], ["hjkl", MID], ["ijk", BRIGHT],
  ["hz134l", BRIGHT], ["zy21", DEEP], ["123", MID],
];
const THIN = "AB AC BC BE AM DM MK DE EF GF FH HI IL LK ab ac bc af fe fg gh cd de dm mn mo op pq qr nr rs st su uv uw wx xy yz t7 67 56 59 98 87 8z 9h gi ij ik kl l4 43 y2 21 23".split(" ");
const THICK = "CD DJ DG GH JK JL be en eh nt pn tv vw tz hz z1 13 hj jk".split(" ");
const pts = (s) => [...s].map((c) => P[c].join(",")).join(" ");
const DOTS = "ABCFGHJKLMabcefghijknopqtuvwz123";
const SMALL_DOTS = "DEdlmrsxy489";

function Scene() {
  const ks = Array.from({ length: 17 }, (_, i) => i - 8);
  const gx = (k, y) => 453.500 + 46.500 * k + ((18 + 25.300 * k) * (y - 523)) / 342;
  return (
    <svg viewBox="0 512 850 375" preserveAspectRatio="xMidYMid slice" className="absolute inset-0 h-full w-full" role="img" aria-label="3D view of the offset mesh">
      <g stroke="#4a4a4a" fill="none">
        {ks.map((k) => <path key={k} d={`M${gx(k, 512)} 512 L${gx(k, 887)} 887`} />)}
        {[523.500, 557.500, 594.500, 636.500, 735.500, 796.500, 865.500].map((y) => <path key={y} d={`M${gx(-8, y)} ${y} H${gx(8, y)}`} />)}
      </g>
      <path d="M0 682.500 H850" stroke="#8c1414" />
      <path d="M452.500 512 L472.500 887" stroke="#1a8a1a" strokeWidth="1.300" />
      {FACES.map(([f, c]) => <polygon key={f} points={pts(f)} fill={c} />)}
      <g stroke="#84c5ec" fill="none">
        {THIN.map((e) => <polyline key={e} points={pts(e)} />)}
        {THICK.map((e) => <polyline key={e} points={pts(e)} strokeWidth="2" />)}
      </g>
      <g fill="#f9faf0">
        {[...DOTS].map((c) => <rect key={c} x={P[c][0] - 2} y={P[c][1] - 2} width="4" height="4" />)}
        {[...SMALL_DOTS].map((c) => <rect key={c} x={P[c][0] - 1} y={P[c][1] - 1} width="2" height="2" />)}
      </g>
      <g fill="#84c5ec"><rect x="408" y="741" width="1" height="1" /><rect x="523" y="748" width="1" height="1" /><rect x="595" y="674" width="1" height="1" /></g>

      {/* 3D cursor */}
      <circle cx="346" cy="545" r="10" fill="none" stroke="#fff" strokeWidth="1.300" />
      <circle cx="346" cy="545" r="10" fill="none" stroke="#f00" strokeWidth="1.300" strokeDasharray="3.930 3.930" />
      <path d="M326 544.500 H341 M355 544.500 H366 M346.500 525 V540 M346.500 550 V565" stroke="#000" />

      {/* translate manipulator */}
      <path d="M459 632 L461 670" stroke="#00dd00" />
      <path d="M467 646 L463 675" stroke="#0000dd" />
      <path d="M477 682.500 H527" stroke="#e00000" strokeWidth="1.400" />
      <path d="M458.700 617 L463 632 Q459 634 454.500 632Z" fill="#00e000" />
      <path d="M469 629 L473 644 Q467 650 462 644Z" fill="#0000e0" />
      <path d="M545 682.500 L527 687.500 Q524.500 682.500 527 677.500Z" fill="#e00000" />
      <circle cx="461.500" cy="682.500" r="15.200" fill="none" stroke="#fff" strokeWidth="1.200" />
      <path d="M461.500 682.500 L462.500 705" stroke="#1a8a1a" />
      <circle cx="461.500" cy="682.500" r="3" fill="#d08030" stroke="#111" />
    </svg>
  );
}

function Viewport() {
  return (
    <section className="relative min-h-[375px] flex-1 overflow-hidden bg-[#393939] text-white">
      <Scene />
      <p className="absolute left-[8px] top-[10px]">User Persp</p>
      <div className="absolute bottom-[18px] left-[10px] h-[44px] w-[42px]">
        <svg className="h-full w-full overflow-visible" viewBox="0 0 42 44" aria-hidden="true">
          <path d="M4 14 V24" stroke="#00b400" strokeWidth="2" />
          <path d="M4 23 V35" stroke="#1020d0" strokeWidth="2" />
          <path d="M4 36 H29" stroke="#c00808" strokeWidth="2" />
          <text x="6" y="11" fontSize="11" fill="#00b000">y</text>
          <text x="6" y="21" fontSize="11" fill="#1515d8">z</text>
          <text x="31" y="34" fontSize="11" fill="#c01010">x</text>
        </svg>
      </div>
      <p className="absolute bottom-[5px] left-[58px]">(204) Plane</p>
      <button aria-label="Show properties" className="absolute right-0 top-[22px] flex h-[14px] w-[15px] items-center justify-center rounded-l-[4px] bg-[#262626]">
        <Svg w={7} h={7}><path d="M3.500 0 V7 M0 3.500 H7" stroke="#9a9a9a" strokeWidth="2" /></Svg>
      </button>
      <svg className="absolute right-0 top-0" width="13" height="13" aria-hidden="true">
        <path d="M1 1 L13 13 M4 1 L13 10 M7 1 L13 7 M10 1 L13 4" stroke="#b0b0b0" strokeWidth="0.900" />
        <path d="M2.500 1 L13 11.500 M5.500 1 L13 8.500" stroke="#111" strokeWidth="0.900" />
      </svg>
    </section>
  );
}

export default function App() {
  return (
    <main className="flex min-h-screen w-full flex-col overflow-hidden bg-[#393939] font-['DejaVu_Sans_Condensed','DejaVu_Sans',sans-serif] text-[11px] leading-4 text-black">
      <NodeEditor />
      <NodeHeader />
      <Viewport />
      <ViewHeader />
    </main>
  );
}
